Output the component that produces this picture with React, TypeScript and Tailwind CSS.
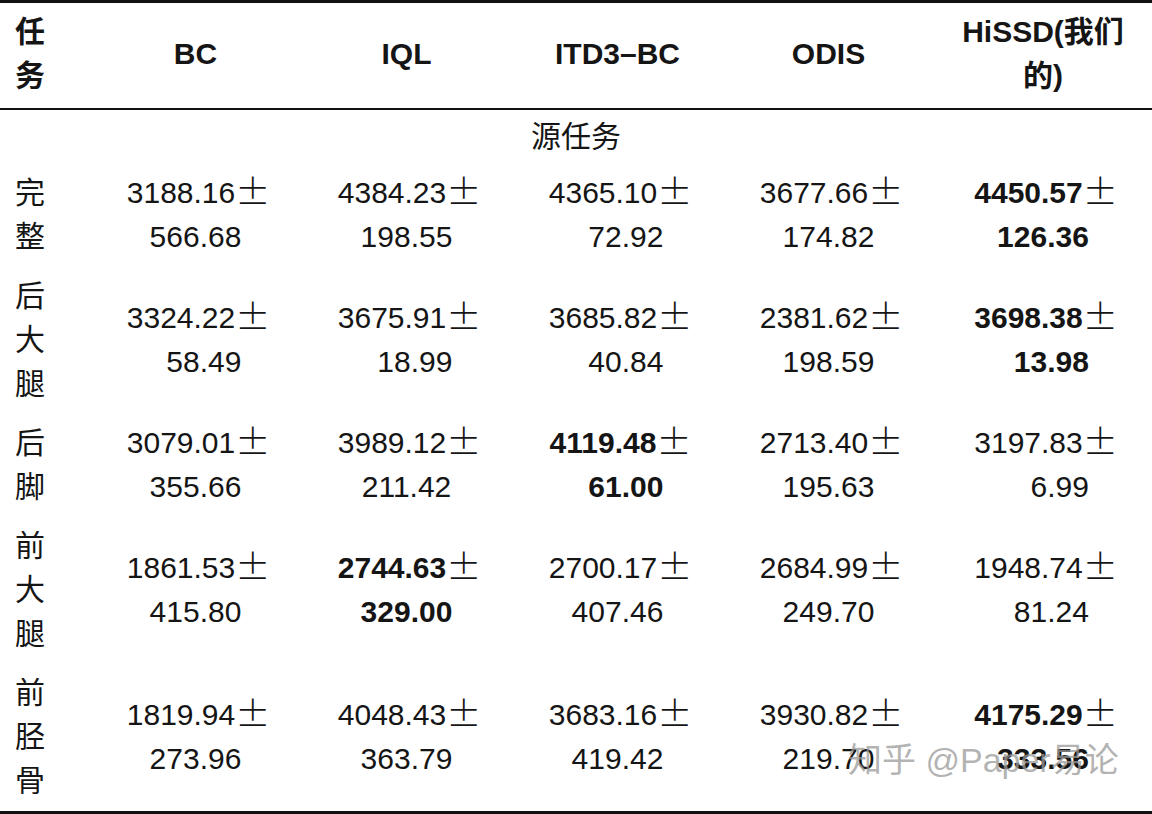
import React from "react";

type Cell = { a: string; b: string; bold?: boolean };
type Row = { label: string[]; cells: Cell[] };

const rows: Row[] = [
  {
    label: ["完", "整"],
    cells: [
      { a: "3188.16", b: "566.68" },
      { a: "4384.23", b: "198.55" },
      { a: "4365.10", b: "72.92" },
      { a: "3677.66", b: "174.82" },
      { a: "4450.57", b: "126.36", bold: true },
    ],
  },
  {
    label: ["后", "大", "腿"],
    cells: [
      { a: "3324.22", b: "58.49" },
      { a: "3675.91", b: "18.99" },
      { a: "3685.82", b: "40.84" },
      { a: "2381.62", b: "198.59" },
      { a: "3698.38", b: "13.98", bold: true },
    ],
  },
  {
    label: ["后", "脚"],
    cells: [
      { a: "3079.01", b: "355.66" },
      { a: "3989.12", b: "211.42" },
      { a: "4119.48", b: "61.00", bold: true },
      { a: "2713.40", b: "195.63" },
      { a: "3197.83", b: "6.99" },
    ],
  },
  {
    label: ["前", "大", "腿"],
    cells: [
      { a: "1861.53", b: "415.80" },
      { a: "2744.63", b: "329.00", bold: true },
      { a: "2700.17", b: "407.46" },
      { a: "2684.99", b: "249.70" },
      { a: "1948.74", b: "81.24" },
    ],
  },
  {
    label: ["前", "胫", "骨"],
    cells: [
      { a: "1819.94", b: "273.96" },
      { a: "4048.43", b: "363.79" },
      { a: "3683.16", b: "419.42" },
      { a: "3930.82", b: "219.70" },
      { a: "4175.29", b: "333.56", bold: true },
    ],
  },
];

const grid = "grid grid-cols-[90px_211px_211px_211px_211px_1fr]";

function Num({ c }: { c: Cell }) {
  const intDigits = c.b.split(".")[0].length;
  const pad = Math.max(0, 3 - intDigits);
  const pads = pad === 2 ? "00" : pad === 1 ? "0" : "";
  return (
    <div className={`flex flex-col items-center justify-center ${c.bold ? "font-bold" : "font-normal"}`}>
      <div className="whitespace-nowrap">
        {c.a}
        <span
          className="inline-block w-[29px] text-center font-light text-[35px] leading-[30px] align-[-2px]"
          style={{ fontFamily: '"Noto Sans CJK SC", sans-serif' }}
        >
          ±
        </span>
      </div>
      <div className="whitespace-nowrap">
        {pads && <span className="invisible">{pads}</span>}
        {c.b}
      </div>
    </div>
  );
}

export default function App() {
  return (
    <div
      className="relative w-[1152px] h-[814px] overflow-hidden bg-white text-[#151515] text-[30px] leading-[44px]"
      style={{ fontFamily: '"Liberation Sans", "Noto Sans CJK SC", sans-serif' }}
    >
      <div className="border-t-[3px] border-[#111]">
        <div className={`${grid} pt-[7px] pb-[10px] border-b-2 border-[#111] font-bold`}>
          <div className="pl-[15px] flex flex-col">
            <span>任</span>
            <span>务</span>
          </div>
          <div className="flex items-center justify-center">BC</div>
          <div className="flex items-center justify-center">IQL</div>
          <div className="flex items-center justify-center">ITD3–BC</div>
          <div className="flex items-center justify-center">ODIS</div>
          <div className="flex flex-col items-center justify-center">
            <span>HiSSD(我们</span>
            <span>的)</span>
          </div>
        </div>
        <div className="pt-[5px] pb-[5px] text-center">源任务</div>
        {rows.map((r, i) => (
          <div key={i} className={`${grid} pt-[7px] pb-[8px]`}>
            <div className="pl-[15px] flex flex-col">
              {r.label.map((ch, j) => (
                <span key={j}>{ch}</span>
              ))}
            </div>
            {r.cells.map((c, j) => (
              <Num key={j} c={c} />
            ))}
          </div>
        ))}
        <div className="border-t-[3px] border-[#111]" />
      </div>
      <div className="absolute left-[848px] top-[738px] text-[34px] leading-[44px] text-[#9a9a9a]/75 whitespace-nowrap">
        知乎 @Paper易论
      </div>
    </div>
  );
}
